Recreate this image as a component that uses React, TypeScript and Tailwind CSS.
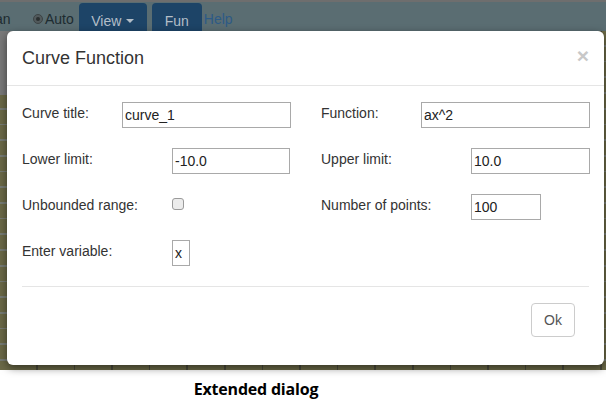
import React from "react";

function Field({
  label,
  labelW,
  inputW,
  value,
}: {
  label: string;
  labelW: string;
  inputW: string;
  value: string;
}) {
  return (
    <div className="flex items-start h-[26px]">
      <div className={`${labelW} shrink-0 leading-[22px] text-[14px] text-[#333]`}>{label}</div>
      <div
        className={`${inputW} h-[26px] shrink-0 border border-[#a9a9a9] bg-white pl-[2px] text-[14px] leading-[25px] text-[#222]`}
      >
        {value}
      </div>
    </div>
  );
}

export default function App() {
  return (
    <div
      className="relative w-[606px] h-[407px] overflow-hidden bg-white"
      style={{ fontFamily: '"Liberation Sans", Arial, sans-serif' }}
    >
      {/* App background (dimmed) */}
      <div className="flex flex-col h-[370px]">
        <div className="h-[2px] bg-[#6e6e6e]" />
        <div className="h-[29px] bg-[#5a6d72] flex items-end">
          <div className="flex items-center h-[29px] w-full">
            <span className="text-[14px] text-[#1d2b30] -ml-[5px] w-[38px] mt-[5px] shrink-0">an</span>
            <div className="flex items-center mt-[5px]">
              <div className="w-[10px] h-[10px] rounded-full bg-[#525a5c] border border-[#3c4345] flex items-center justify-center">
                <div className="w-[4px] h-[4px] rounded-full bg-[#2a2f30]" />
              </div>
              <span className="ml-[2px] text-[14px] text-[#1d2b30]">Auto</span>
            </div>
            <div className="ml-[5px] self-end h-[28px] w-[68px] rounded-t-[4px] bg-[#1d4467] flex items-start justify-center pt-[10px] text-[14px] leading-[16px] text-[#b3bec8]">
              View
              <span className="ml-[5px] mt-[6px] w-0 h-0 border-l-[4px] border-r-[4px] border-t-[4px] border-l-transparent border-r-transparent border-t-[#b3bec8]" />
            </div>
            <div className="ml-[5px] self-end h-[28px] w-[50px] rounded-t-[4px] bg-[#1d4467] flex items-start justify-center pt-[10px] text-[14px] leading-[16px] text-[#b3bec8]">
              Fun
            </div>
            <span className="ml-[2px] mt-[5px] text-[14px] text-[#2d5a86]">Help</span>
          </div>
        </div>
        <div className="flex-1 relative bg-[#6b6947] bg-[image:repeating-linear-gradient(to_bottom,transparent_0px,transparent_14px,#767b74_14px,#767b74_15.7px),repeating-linear-gradient(to_right,transparent_0px,transparent_36px,#4a4a3a_36px,#4a4a3a_37.6px)]">
          <div className="w-[40px] h-[64px] bg-[#797979]" />
        </div>
      </div>

      {/* Caption */}
      <div className="h-[37px] flex items-center justify-center pr-[94px]">
        <span
          className="text-[16px] font-bold text-black tracking-[-0.2px]"
          style={{ fontFamily: '"Open Sans", "Noto Sans", sans-serif' }}
        >
          Extended dialog
        </span>
      </div>

      {/* Modal dialog */}
      <div className="absolute left-[7px] top-[31px] w-[597px] h-[334px] rounded-[6px] bg-white shadow-[0_3px_9px_rgba(0,0,0,0.5)] flex flex-col">
        <div className="h-[55px] shrink-0 border-b border-[#e5e5e5] px-[15px] flex items-center justify-between">
          <span className="text-[18px] text-[#333]">Curve Function</span>
          <span className="text-[21px] font-bold leading-none text-[#c8c8c8] -mt-[5px]">×</span>
        </div>
        <div className="px-[15px] pt-[16px]">
          <div className="grid grid-cols-[268px_269px] gap-x-[31px] gap-y-[20px]">
            <Field label="Curve title:" labelW="w-[100px]" inputW="w-[169px]" value="curve_1" />
            <Field label="Function:" labelW="w-[100px]" inputW="w-[169px]" value="ax^2" />
            <Field label="Lower limit:" labelW="w-[150px]" inputW="w-[118px]" value="-10.0" />
            <Field label="Upper limit:" labelW="w-[150px]" inputW="w-[119px]" value="10.0" />
            <div className="flex items-start h-[26px]">
              <div className="w-[150px] shrink-0 leading-[22px] text-[14px] text-[#333]">Unbounded range:</div>
              <div className="mt-[4px] w-[12px] h-[12px] rounded-[3px] border border-[#9a9a9a] bg-[#ececec]" />
            </div>
            <Field label="Number of points:" labelW="w-[150px]" inputW="w-[70px]" value="100" />
            <Field label="Enter variable:" labelW="w-[150px]" inputW="w-[18px]" value="x" />
          </div>
          <div className="mt-[20px] h-px bg-[#e5e5e5]" />
          <div className="flex justify-end pt-[16px] pr-[14px]">
            <div className="w-[44px] h-[34px] rounded-[4px] border border-[#ccc] bg-white flex items-center justify-center text-[14px] text-[#555]">
              Ok
            </div>
          </div>
        </div>
      </div>
    </div>
  );
}
